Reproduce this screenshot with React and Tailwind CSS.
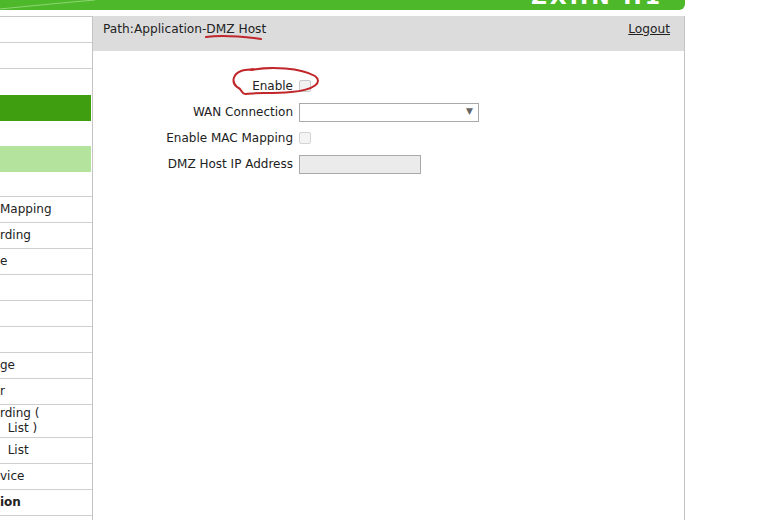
const menu = [
  { t: "", h: 26 },
  { t: "", h: 26 },
  { t: "", h: 26, noLine: true },
  { t: "", h: 26, bg: "bg-[#3f9e10]", noLine: true },
  { t: "", h: 25, noLine: true },
  { t: "", h: 26, bg: "bg-[#b3e39c]", noLine: true },
  { t: "", h: 25 },
  { t: "Mapping", h: 26 },
  { t: "rding", h: 26 },
  { t: "e", h: 26 },
  { t: "", h: 26 },
  { t: "", h: 26 },
  { t: "", h: 26 },
  { t: "ge", h: 26 },
  { t: "r", h: 26 },
  { t: "rding (\n\u00a0\u00a0List )", h: 33 },
  { t: "\u00a0\u00a0List", h: 26 },
  { t: "vice", h: 26 },
  { t: "ion", h: 26, bold: true },
  { t: "", h: 26 },
];

export default function App() {
  return (
    <div className="w-[771px] h-[520px] overflow-hidden bg-white text-[12px] text-[#222] font-['DejaVu_Sans',Verdana,sans-serif]">
      <div className="w-[685px]">
        {/* banner */}
        <div className="relative h-[10px] bg-[#4cb82a] rounded-br-[6px] overflow-hidden flex justify-end">
          <svg className="absolute left-0 top-0" width="120" height="10" viewBox="0 0 120 10">
            <path d="M0 9 C 30 6, 60 3, 95 0" stroke="#8fd572" strokeWidth="1" fill="none" />
          </svg>
          <span className="mr-[22px] -mt-[14px] text-[22px] font-bold tracking-[3px] text-white leading-none">ZXHN H1</span>
        </div>
        <div className="h-[6px]" />
        <div className="flex">
          {/* sidebar */}
          <div className="w-[93px] shrink-0 border-r border-[#c4c4c4] border-t border-t-[#c8c8c8]">
            {menu.map((m, i) => (
              <div
                key={i}
                style={{ height: m.h }}
                className={`${m.bg || ""} ${m.noLine ? "" : "border-b border-[#cfcfcf]"} flex items-center whitespace-pre leading-[15px] ${m.bold ? "font-bold" : ""} ${m.bg ? "mr-[1px]" : ""}`}
              >
                {m.t}
              </div>
            ))}
          </div>
          {/* main */}
          <div className="relative flex-1 border-r border-[#c4c4c4] h-[504px]">
            <div className="h-[35px] bg-[#dcdcdc] flex items-start justify-between pt-[4px] pl-[10px] pr-[14px] text-[12.2px]">
              <span>Path:Application-DMZ Host</span>
              <span className="underline">Logout</span>
            </div>
            <svg className="absolute left-[111px] top-[18px]" width="60" height="8" viewBox="0 0 60 8">
              <path d="M2 3 C 15 1, 35 2, 57 5" stroke="#c0262a" strokeWidth="2" fill="none" strokeLinecap="round" />
            </svg>
            <div className="pt-[22px] grid grid-cols-[200px_1fr] auto-rows-[26px] gap-x-[6px] items-center">
              <div className="text-right">Enable</div>
              <div className="flex"><span className="w-[12px] h-[12px] border border-[#c8c8c8] bg-[#f2f2f2] rounded-[2px]" /></div>
              <div className="text-right">WAN Connection</div>
              <div className="flex">
                <div className="w-[180px] h-[19px] border border-[#a9a9a9] bg-white flex items-center justify-end pr-[5px]">
                  <span className="text-[9px] text-[#666]">▼</span>
                </div>
              </div>
              <div className="text-right">Enable MAC Mapping</div>
              <div className="flex"><span className="w-[12px] h-[12px] border border-[#d4d4d4] bg-[#f4f4f4] rounded-[2px]" /></div>
              <div className="text-right">DMZ Host IP Address</div>
              <div className="flex"><div className="w-[122px] h-[19px] border border-[#a9a9a9] bg-[#ebebeb]" /></div>
            </div>
            <svg className="absolute left-[138px] top-[50px]" width="92" height="32" viewBox="0 0 92 32">
              <path d="M20 4 C 40 0, 70 2, 84 10 C 92 16, 84 24, 60 26 C 40 28, 25 26, 15 28 C 10 29, 12 23, 6 21 C 0 16, 2 8, 10 5 C 13 4, 16 4, 22 3" stroke="#c0262a" strokeWidth="2" fill="none" strokeLinecap="round" />
            </svg>
          </div>
        </div>
      </div>
    </div>
  );
}
